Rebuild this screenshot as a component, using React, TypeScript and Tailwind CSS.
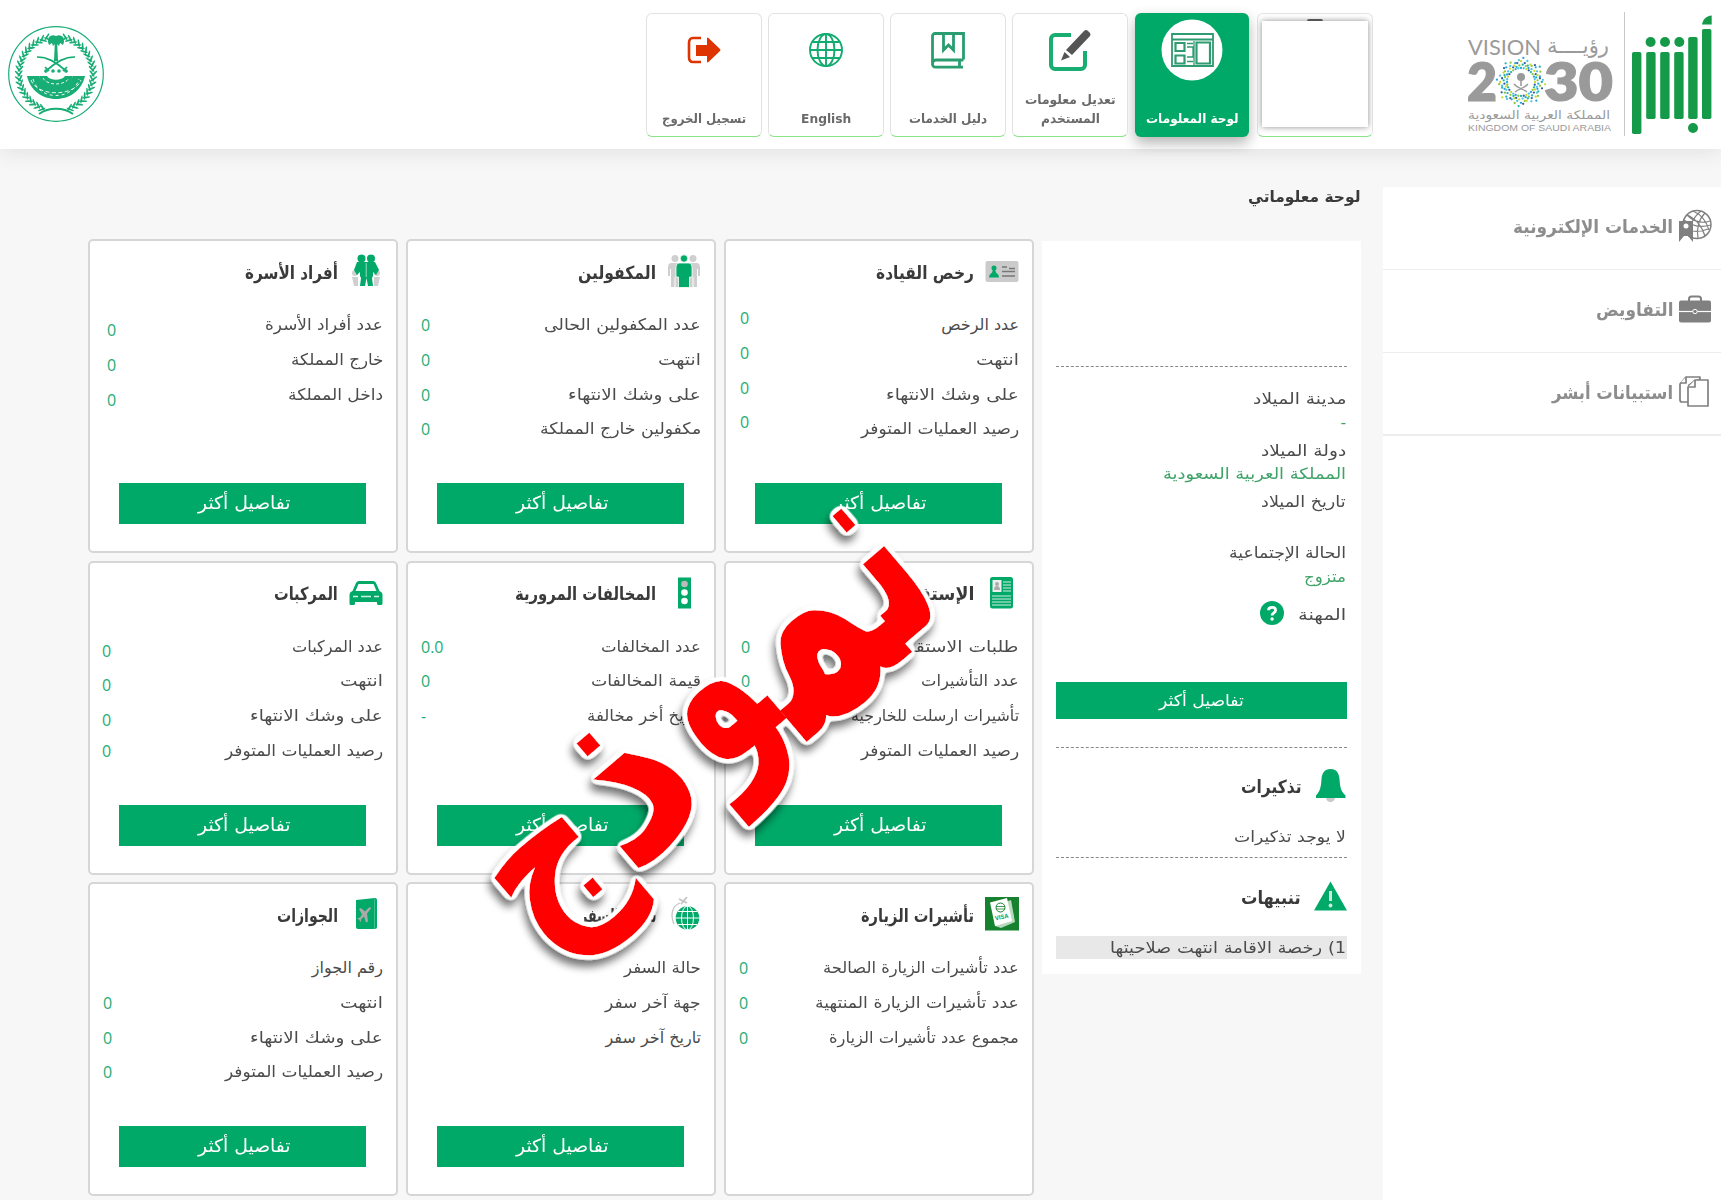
import { useLayoutEffect, useRef, useState } from "react";
import type { ReactNode } from "react";

const G = "#00a968";

/* Text squeezed or stretched horizontally to a fixed measure. */
function Fit({ w, children, className = "" }: { w: number; children: string; className?: string }) {
  const ref = useRef<HTMLSpanElement>(null);
  const [scale, setScale] = useState(1);
  useLayoutEffect(() => {
    if (ref.current && ref.current.offsetWidth) setScale(w / ref.current.offsetWidth);
  }, [w]);
  return (
    <span className={"inline-flex shrink-0 justify-start whitespace-nowrap " + className} style={{ width: w }}>
      <span ref={ref} className="inline-block shrink-0 origin-right" style={{ transform: `scaleX(${scale})` }}>
        {children}
      </span>
    </span>
  );
}

function Emblem() {
  const leaves = [];
  for (let i = 0; i < 20; i++) {
    const a = ((108 + i * 7.6) * Math.PI) / 180;
    const x = 49 + Math.cos(a) * 37;
    const y = 49 - Math.sin(a) * 37;
    const deg = -(a * 180) / Math.PI;
    leaves.push(
      <g key={i} transform={`translate(${x} ${y}) rotate(${deg})`}>
        <ellipse cx="3" cy="1" rx="4" ry="0.9" transform="rotate(50)" />
        <ellipse cx="-3" cy="1" rx="4" ry="0.9" transform="rotate(-50)" />
      </g>
    );
  }
  return (
    <svg width="98" height="98" viewBox="0 0 98 98" fill="#17ad75">
      <circle cx="49" cy="49" r="47.3" fill="none" stroke="#17ad75" strokeWidth="1.2" />
      <g>{leaves}</g>
      <g transform="matrix(-1 0 0 1 98 0)">{leaves}</g>
      <path d="M47.8 18h2.4l.8 18h-4z" />
      <path d="M42 12q3-3 7-1 4-2 7 1 2 4 0 8l-3-2-1 3-3-3-3 3-1-3-3 2q-2-4 0-8z" />
      <g fill="none" stroke="#17ad75" strokeWidth="1.7">
        <path d="M30 32c10 0 18 4 30 15M68 32c-10 0-18 4-30 15" />
        <path d="M56 46l4-4M42 46l-4-4" />
      </g>
      <circle cx="39" cy="46" r="1.8" /><circle cx="59" cy="46" r="1.8" />
      <circle cx="46" cy="46" r="1.8" /><circle cx="52" cy="46" r="1.8" />
      <path d="M20 51h12c4 13 30 13 34 0h12c-3 14-15 23-29 23S23 65 20 51z" />
      <path d="M32 51h8c3 5 15 5 18 0h8c-3 14-31 14-34 0z" />
      <g fill="none" stroke="#fff" strokeWidth="0.9">
        <path d="M24 55c6 17 44 17 50 0" strokeDasharray="4 2.4" />
        <path d="M26 54c6 22 40 22 46 0" strokeDasharray="3 3" />
        <path d="M36 53c4 8 22 8 26 0" strokeDasharray="3 2" />
      </g>
      <path d="M32 89c10-7 24-7 34 0" fill="none" stroke="#17ad75" strokeWidth="2" />
    </svg>
  );
}

function VisionLogo() {
  const cols = ["#2aa5dc", "#8cc63f", "#1fb5ad", "#2f5fa5", "#c9d92b", "#4cc3e8"];
  const dots = [];
  for (let ring = 0; ring < 4; ring++) {
    for (let i = 0; i < 32; i++) {
      const point = Math.abs((i % 4) - 2) / 2;
      const r = 14 + ring * (1.9 + point * 1.5);
      const a = ((i + (ring % 2) * 0.5) / 32) * Math.PI * 2;
      dots.push(
        <circle key={ring + "-" + i} cx={53 + Math.sin(a) * r} cy={60 - Math.cos(a) * r} r={1.15} fill={cols[(i * 5 + ring * 2) % 6]} />
      );
    }
  }
  return (
    <svg direction="ltr" width="146" height="114" viewBox="0 0 146 114" fill="#9a9a9a" fontFamily="Lato, sans-serif">
      <text x="0" y="33" fontSize="21.5" textLength="73" lengthAdjust="spacingAndGlyphs">VISION</text>
      <text x="141" y="31" fontSize="22" direction="rtl" fontFamily="'DejaVu Sans', sans-serif" textLength="62" lengthAdjust="spacingAndGlyphs">رؤيــــة</text>
      <text x="-1" y="79" fontSize="52" fontWeight="800" textLength="30" lengthAdjust="spacingAndGlyphs" stroke="#9a9a9a">2</text>
      <text x="76" y="79" fontSize="52" fontWeight="800" textLength="69" lengthAdjust="spacingAndGlyphs" stroke="#9a9a9a">30</text>
      {dots}
      <circle cx="53" cy="55" r="4" />
      <path d="M52.200 56h1.600v8h-1.600z" />
      <path d="M46 62c3 4 8 4 13 8M60 62c-3 4-8 4-13 8" fill="none" stroke="#9a9a9a" strokeWidth="1.400" />
      <text x="142" y="97" fontSize="12" direction="rtl" fontFamily="'DejaVu Sans', sans-serif" textLength="142" lengthAdjust="spacingAndGlyphs">المملكة العربية السعودية</text>
      <text x="0" y="109" fontSize="9.800" fontFamily="'Liberation Sans', sans-serif" textLength="143" lengthAdjust="spacingAndGlyphs">KINGDOM OF SAUDI ARABIA</text>
    </svg>
  );
}

function AbsherLogo() {
  const bars = [
    [0, 40, 82], [14.2, 40, 67], [28.2, 40, 67], [42.2, 40, 67], [56.2, 25, 82], [70, 17, 90],
  ];
  return (
    <svg width="80" height="124" viewBox="0 0 80 124" fill="#149a48">
      {bars.map(([x, y, h]) => <rect key={x} x={x} y={y} width="9.4" height={h} rx="1.8" />)}
      <path d="M70 12.5c1-5 4-8.500 9.700-9v9z" />
      <circle cx="18.600" cy="30" r="5" /><circle cx="33" cy="30" r="5" /><circle cx="47.300" cy="30" r="5" />
      <circle cx="61" cy="116" r="5" />
    </svg>
  );
}

function GlobeIcon() {
  return (
    <svg width="34" height="34" viewBox="0 0 34 34" fill="none" stroke="#12ab70" strokeWidth="1.9">
      <circle cx="17" cy="17" r="16" /><ellipse cx="17" cy="17" rx="8.500" ry="16" />
      <path d="M17 1v32M1 17h32M3.500 9h27M3.500 25h27" />
    </svg>
  );
}

function BookIcon() {
  return (
    <svg width="34" height="37" viewBox="0 0 34 37" fill="none" stroke="#2a9d70" strokeWidth="2.800">
      <path d="M32.500 27.500V1.500H4A2.500 2.500 0 0 0 1.500 4v28A3 3 0 0 0 4.500 35.200H32M32.500 28H5a3.500 3.500 0 0 0-3.500 3.500M28.500 28v7" />
      <path d="M12.500 2v16l5-5 5 5V2" />
    </svg>
  );
}

function LogoutIcon() {
  return (
    <svg width="34" height="28" viewBox="0 0 34 28">
      <path d="M14 2H6Q2 2 2 7v14q0 5 4 5h8" fill="none" stroke="#de3500" strokeWidth="2.600" />
      <path d="M9 9h11V2.500Q20 1 21.500 2L33 13q1 1 0 2L21.500 26Q20 27 20 25.500V20H9z" fill="#de3500" />
    </svg>
  );
}

function EditIcon() {
  return (
    <svg width="44" height="44" viewBox="0 0 44 44">
      <path d="M23 7H7a4 4 0 0 0-4 4v26a4 4 0 0 0 4 4h26a4 4 0 0 0 4-4V23" fill="none" stroke="#1aad72" strokeWidth="4" />
      <path d="M18 22 36 3q2-2 4 0l2 2q1 1.500 0 3L24 27z M16.500 24l5.500 5-9 3.500z" fill="#555" />
    </svg>
  );
}

function DashboardIcon() {
  return (
    <svg width="62" height="62" viewBox="0 0 62 62">
      <circle cx="31" cy="31" r="30.500" fill="#fff" />
      <g fill="none" stroke="#2f9b70" strokeWidth="1.800">
        <path d="M11 15h41v32H11zM11 20.500h41" />
        <path d="M14.500 24h9v8h-9zM14.500 36.500h9v8h-9zM35.500 23.500H49v21H35.500z" strokeWidth="2.200" />
        <path d="M26 24.500h6M26 28h6v5M26 38h6v-5M26 42.500h6M33 22v24" strokeWidth="1.300" />
      </g>
    </svg>
  );
}

type NavTile = { icon: ReactNode; lines: [string, number][]; active?: boolean };

const tiles: NavTile[] = [
  { icon: <DashboardIcon />, lines: [["لوحة المعلومات", 93]], active: true },
  { icon: <EditIcon />, lines: [["تعديل معلومات", 91], ["المستخدم", 59]] },
  { icon: <BookIcon />, lines: [["دليل الخدمات", 78]] },
  { icon: <GlobeIcon />, lines: [["English", 50]] },
  { icon: <LogoutIcon />, lines: [["تسجيل الخروج", 84]] },
];

function Tile({ t }: { t: NavTile }) {
  return (
    <div
      className={
        "flex h-[124px] flex-col items-center justify-between rounded-md text-[13px] font-bold leading-[19px] " +
        (t.active
          ? "ml-px mr-[2px] w-[114px] bg-[#00a968] pb-[9px] text-white shadow-[0_6px_14px_rgba(0,0,0,0.3)]"
          : "w-[116px] border border-[#e2e2e2] border-b-[#8be587] bg-white pb-[8px] text-[#6a6a6a]")
      }
    >
      <div className={"flex items-center justify-center " + (t.active ? "h-[74px]" : "h-[72px]")}>{t.icon}</div>
      <div className="flex flex-col items-center">
        {t.lines.map(([s, w]) => <Fit key={s} w={w}>{s}</Fit>)}
      </div>
    </div>
  );
}

function Header() {
  return (
    <header className="relative z-10 flex h-[149px] shrink-0 items-start bg-white shadow-[0_2px_22px_rgba(0,0,0,0.1)]">
      <div className="mr-[9px] mt-[12px] flex">
        <AbsherLogo />
        <div className="mr-[7px] h-[124px] w-px bg-[#c9c9c9]" />
        <div className="mr-[10px] mt-[10px]"><VisionLogo /></div>
      </div>
      <nav className="mr-[95px] mt-[13px] flex gap-[6px]">
        <div className="h-[124px] w-[116px] overflow-hidden rounded-md border border-[#e2e2e2] border-b-[#8be587] bg-white px-[4px] pt-[7px]">
          <div className="flex h-[106px] justify-center bg-white shadow-[0_0_6px_rgba(0,0,0,0.45)]">
            <div className="-mt-[2px] h-[2px] w-[16px] rounded-t-full bg-[#555]" />
          </div>
        </div>
        {tiles.map((t) => <Tile key={t.lines[0][0]} t={t} />)}
      </nav>
      <div className="ml-[7px] mr-auto mt-[25px]"><Emblem /></div>
    </header>
  );
}

/* ---------- side menu ---------- */

function CertificateGlobe() {
  return (
    <svg width="34" height="34" viewBox="0 0 34 34" fill="none" stroke="#808080">
      <circle cx="19" cy="15.500" r="14" strokeWidth="1.500" />
      <path d="M6 11c9 7 17 8 27 5M9 6c7 7 14 9 23 6M13 28c-3-8 1-19 10-26M20 29c-2-9 1-19 7-25M15 2c7 3 13 9 16 19M9 6c8 3 15 11 18 21M6 20c8 3 15 4 24 0" strokeWidth="1.200" />
      <path d="M1 12h14v21l-5-6-4 0-5 6z" fill="#808080" stroke="none" />
      <circle cx="8" cy="17" r="2.500" fill="#fff" stroke="none" />
    </svg>
  );
}
function Briefcase() {
  return (
    <svg width="34" height="28" viewBox="0 0 34 28">
      <path d="M11 6V4a2.500 2.500 0 0 1 2.500-2.500h7A2.500 2.500 0 0 1 23 4v2" fill="none" stroke="#808080" strokeWidth="2" />
      <rect x="1" y="5.500" width="32" height="22" rx="2" fill="#808080" />
      <path d="M1 16.500h32" stroke="#fff" strokeWidth="1.200" />
      <circle cx="17" cy="16.500" r="2.200" fill="#808080" stroke="#fff" />
    </svg>
  );
}
function Pages() {
  return (
    <svg width="34" height="32" viewBox="0 0 34 32" fill="#fff" stroke="#808080" strokeWidth="1.700" strokeLinejoin="round">
      <path d="M22 3V1H8L2 8v16q0 2 2 2h7V9z" /><path d="M8 1v6H2" />
      <path d="M17 4h13v26H10V11z" /><path d="M17 4v7h-7" />
    </svg>
  );
}

function SideItem({ icon, label, w }: { icon: ReactNode; label: string; w: number }) {
  return (
    <div className="flex h-[83px] items-center gap-[4px] border-b border-[#ededed] pb-[3px] pr-[9px] text-[18px] font-bold text-[#8d8d8d] last:border-b-2">
      <div className="flex w-[35px] justify-center pb-px">{icon}</div>
      <Fit w={w}>{label}</Fit>
    </div>
  );
}

/* ---------- card icons (34 x 34) ---------- */

const Ico = ({ children }: { children: ReactNode }) => (
  <svg width="34" height="34" viewBox="0 0 34 34" fill={G}>{children}</svg>
);

const person = "M-3.500 0h7q3.500 0 3.500 4v9h-2V6h-1v18h-3.500V14h-1v10H-4V6h-1v7h-2V4q0-4 3.500-4z";

const icons: Record<string, ReactNode> = {
  license: (
    <Ico>
      <rect x="0.500" y="7" width="33" height="21" rx="2" fill="#cbcbcb" />
      <circle cx="9" cy="14" r="2.500" /><path d="M4 23.500q0-3 3-5l1-3h2l1 3q3 2 3 5z" />
      <path d="M17 13h5M17 17.500h13M17 22h13M24 14.500h6" stroke="#777" strokeWidth="1.500" />
    </Ico>
  ),
  sponsored: (
    <Ico>
      <g fill="#cfcfcf">
        <circle cx="8" cy="4.500" r="3.500" /><circle cx="26" cy="4.500" r="3.500" />
        <path d={person} transform="translate(8 9)" /><path d={person} transform="translate(26 9)" />
      </g>
      <g stroke="#fff" strokeWidth="0.800"><circle cx="17" cy="4.500" r="3.700" /><path d="M12 9h10q3 0 3 4v10h-2.500v10.500h-11V23H9V13q0-4 3-4z" /></g>
    </Ico>
  ),
  family: (
    <Ico>
      <g fill="#cfcfcf"><circle cx="6" cy="19" r="3" /><circle cx="28" cy="19" r="3" /><path d="M3 23h6v9H5zM25 23h6l-2 9h-4z" /></g>
      <circle cx="12.500" cy="4.500" r="4" /><circle cx="22" cy="4.500" r="4" />
      <path d="M8 8h18l4 8-3 5-3-3v4l-1 2 1 8h-5l-1.500-8-1.500 8h-5l1-8-1-2v-4l-3 3-3-5z" />
      <path d="M17.200 9v14" stroke="#fff" strokeWidth="0.600" />
    </Ico>
  ),
  recruit: (
    <Ico>
      <rect x="5" y="1" width="23" height="31.500" rx="2.500" />
      <rect x="7.500" y="4" width="9" height="12" fill="#eee" /><circle cx="12" cy="8" r="2" fill="#aaa" /><path d="M9 14q0-4 3-4t3 4z" fill="#aaa" />
      <path d="M18 6h8M18 9h8M18 12h8M18 15h8M7 20h19M7 23h19M7 26h19M7 29h19" stroke="#d5eee3" strokeWidth="1" />
    </Ico>
  ),
  signal: (
    <Ico>
      <rect x="11" y="1.500" width="13" height="31" />
      <circle cx="17.500" cy="8" r="3.300" fill="#bbb" /><circle cx="17.500" cy="16.500" r="3.300" fill="#fff" /><circle cx="17.500" cy="25" r="3.300" fill="#fff" />
    </Ico>
  ),
  car: (
    <Ico>
      <path d="M7 7q1-2 3-2h14q2 0 3 2l3.500 8q3 1 3 4v8.500q0 1.500-1.500 1.500h-2.500q-1.500 0-1.500-1.500V26h-22v1.500Q6 29 4.500 29H2Q.5 29 .5 27.500V19q0-3 3-4z" />
      <path d="M9.500 8h15l3 7h-21z" fill="#fff" /><path d="M4 20.500h5M12 20.500h10M25 20.500h5" stroke="#d5eee3" strokeWidth="1.400" />
    </Ico>
  ),
  visa: (
    <Ico>
      <rect width="34" height="33.500" fill="#16812f" />
      <path d="M9 9l17-6 4 22-14 6-6-2z" fill="#b9d9bf" />
      <path d="M5 5.500 22 1l5 23-17 5z" fill="#fff" />
      <circle cx="15.500" cy="10.500" r="4.500" fill="none" stroke="#16812f" /><path d="M11 9.500h9M11 12h9" stroke="#16812f" strokeWidth="0.800" />
      <text direction="ltr" x="10.500" y="23.500" fontSize="6" fontWeight="bold" fontFamily="Roboto, sans-serif" transform="rotate(-13 10.500 23.500)">VISA</text>
    </Ico>
  ),
  travel: (
    <Ico>
      <circle cx="20.500" cy="21" r="11.800" />
      <g fill="none" stroke="#fff" strokeWidth="1"><path d="M20.500 9v24M8.500 21h24M11 14.500h19M11 27.500h19" /><ellipse cx="20.500" cy="21" rx="6" ry="12" /></g>
      <path d="M13 6C5 9 3 18 7 27" fill="none" stroke="#c4c4c4" strokeWidth="1.300" />
      <path d="M12 2l8 4M20 0l-6 7" stroke="#c4c4c4" strokeWidth="1.800" />
    </Ico>
  ),
  passport: (
    <Ico>
      <path d="M7 3l19-2q2 0 2 2v27q0 2-2 2H9q-2 0-2-2z" />
      <path d="M25.500 2v30" stroke="#40bf8d" />
      <path d="M10 12l2-1 4 3.500 4-4q2-1 2 1l-4 5 1 8-2 1-2-6-3 3v3l-2-3-2-1 3-1 2-3z" fill="#aaa" />
    </Ico>
  ),
};

type CardData = {
  icon: string;
  title: [string, number];
  rows: [string, number][];
  values: string[];
  valuesClass: string;
  more?: boolean;
};

const outOf: [string, number] = ["على وشك الانتهاء", 133];
const balance: [string, number] = ["رصيد العمليات المتوفر", 158];
const ended: [string, number] = ["انتهت", 43];

const cards: CardData[] = [
  { icon: "license", title: ["رخص القيادة", 98], rows: [["عدد الرخص", 78], ended, outOf, balance], values: ["0", "0", "0", "0"], valuesClass: "-mt-[7px] ml-[14px]", more: true },
  { icon: "sponsored", title: ["المكفولين", 78], rows: [["عدد المكفولين الحالى", 157], ended, outOf, ["مكفولين خارج المملكة", 161]], values: ["0", "0", "0", "0"], valuesClass: "ml-[13px]", more: true },
  { icon: "family", title: ["أفراد الأسرة", 93], rows: [["عدد أفراد الأسرة", 118], ["خارج المملكة", 92], ["داخل المملكة", 95]], values: ["0", "0", "0"], valuesClass: "mt-[5px] ml-[17px]", more: true },
  { icon: "recruit", title: ["الإستقدام", 84], rows: [["طلبات الاستقدام", 130], ["عدد التأشيرات", 98], ["تأشيرات ارسلت للخارجية", 168], balance], values: ["0", "0", "0", "0"], valuesClass: "ml-[15px]", more: true },
  { icon: "signal", title: ["المخالفات المرورية", 141], rows: [["عدد المخالفات", 100], ["قيمة المخالفات", 110], ["تاريخ أخر مخالفة", 115]], values: ["0.0", "0", "-"], valuesClass: "ml-[13px]", more: true },
  { icon: "car", title: ["المركبات", 64], rows: [["عدد المركبات", 91], ended, outOf, balance], values: ["0", "0", "0", "0"], valuesClass: "mt-[4px] ml-[12px] last:*:last:-mt-[4px]", more: true },
  { icon: "visa", title: ["تأشيرات الزيارة", 113], rows: [["عدد تأشيرات الزيارة الصالحة", 196], ["عدد تأشيرات الزيارة المنتهية", 204], ["مجموع عدد تأشيرات الزيارة", 190]], values: ["0", "0", "0"], valuesClass: "ml-[13px]" },
  { icon: "travel", title: ["سجل السفر", 76], rows: [["حالة السفر", 77], ["جهة آخر سفر", 96], ["تاريخ آخر سفر", 96]], values: [], valuesClass: "", more: true },
  { icon: "passport", title: ["الجوازات", 61], rows: [["رقم الجواز", 71], ended, outOf, balance], values: ["", "0", "0", "0"], valuesClass: "ml-[13px]", more: true },
];

function Card({ c }: { c: CardData }) {
  return (
    <section className="flex h-[314px] flex-col rounded-[5px] border-2 border-[#d6d6d6] bg-white">
      <div className="flex h-[67px] shrink-0 items-center pb-[5px] pr-[13px] text-[18px] font-bold text-[#3a3a3a]">
        <div className="ml-[11px] shrink-0 pb-[2px]">{icons[c.icon]}</div>
        <Fit w={c.title[1]}>{c.title[0]}</Fit>
      </div>
      <div className="flex h-[175px] shrink-0 justify-between">
        <div className="pr-[13px] text-[16px] text-[#4b4b4b]">
          {c.rows.map(([s, w]) => (
            <div key={s} className="flex h-[34.670px] items-center"><Fit w={w}>{s}</Fit></div>
          ))}
        </div>
        <div dir="ltr" className={"font-['Open_Sans',sans-serif] text-[16px] text-[#1fac74] " + c.valuesClass}>
          {c.values.map((v, i) => (
            <div key={i} className="flex h-[34.670px] items-center">{v}</div>
          ))}
        </div>
      </div>
      {c.more && (
        <div className="ml-[29px] flex h-[41px] w-[247px] items-center justify-center self-end bg-[#00a968] pb-[2px] pl-[3px] text-[18px] text-white">
          <Fit w={93}>تفاصيل أكثر</Fit>
        </div>
      )}
    </section>
  );
}

function Profile() {
  const line = "shrink-0 border-t border-dashed border-[#888]";
  return (
    <aside className="mt-px flex h-[733px] w-[319px] flex-col bg-white pl-[14px] pr-[14px] text-[15.500px] leading-[24px] text-[#4b4b4b]">
      <div className={"mt-[125px] " + line} />
      <div className="flex flex-col pr-px">
        <div className="mt-[20px] flex h-[24px]"><Fit w={94}>مدينة الميلاد</Fit></div>
        <div className="flex h-[28px] text-[#3fa368]">-</div>
        <div className="flex h-[23px]"><Fit w={85}>دولة الميلاد</Fit></div>
        <div className="flex h-[28px] text-[#3fa368]"><Fit w={183}>المملكة العربية السعودية</Fit></div>
        <div className="flex h-[51px]"><Fit w={85}>تاريخ الميلاد</Fit></div>
        <div className="flex h-[24px]"><Fit w={117}>الحالة الإجتماعية</Fit></div>
        <div className="flex h-[37px] text-[#3fa368]"><Fit w={42}>متزوج</Fit></div>
        <div className="flex h-[25px] items-center gap-[14px]">
          <Fit w={48}>المهنة</Fit>
          <svg width="24" height="24" viewBox="0 0 24 24" className="-mt-[3px]">
            <circle cx="12" cy="12" r="12" fill={G} />
            <path d="M8.500 9.300C8.700 5.500 15.600 5.500 15.600 9.300c0 2.600-3.500 2.500-3.500 5.200" fill="none" stroke="#fff" strokeWidth="2.800" />
            <circle cx="12.100" cy="18" r="1.700" fill="#fff" />
          </svg>
        </div>
      </div>
      <div className="mt-[55px] flex h-[37px] shrink-0 items-center justify-center bg-[#00a968] text-[16px] text-white"><Fit w={85}>تفاصيل أكثر</Fit></div>
      <div className={"mt-[28px] " + line} />
      <div className="mt-[18px] flex h-[38px] items-center gap-[13px] text-[18px] font-bold text-[#3a3a3a]">
        <svg width="33" height="35" viewBox="0 0 33 35">
          <circle cx="16.500" cy="29.500" r="4.500" fill="#c9c9c9" />
          <path d="M16.500 1c6 0 8.500 4 9 10 .5 7 1 12 6 16.500V30H2v-2.500C6.500 23 7 18 7.500 11 8 5 10.500 1 16.500 1z" fill={G} />
        </svg>
        <div className="pt-[4px]"><Fit w={60}>تذكيرات</Fit></div>
      </div>
      <div className="mt-[21px] flex h-[32px] pr-px"><Fit w={112}>لا يوجد تذكيرات</Fit></div>
      <div className={line} />
      <div className="mt-[19px] flex h-[38px] items-center gap-[13px] text-[18px] font-bold text-[#3a3a3a]">
        <svg width="33" height="30" viewBox="0 0 33 30">
          <path d="M16.500.500 33 29.500H0z" fill={G} />
          <path d="M16.500 10v10" stroke="#cfe9dd" strokeWidth="3" /><circle cx="16.500" cy="24.500" r="1.900" fill="#cfe9dd" />
        </svg>
        <div className="pt-[3px]"><Fit w={60}>تنبيهات</Fit></div>
      </div>
      <div className="mt-[21px] flex h-[23px] items-center bg-[#e8e8e8] pr-px"><Fit w={236}>1) رخصة الاقامة انتهت صلاحيتها</Fit></div>
    </aside>
  );
}

/* ---------- sample stamp ---------- */

/* Ink bounds of a letter drawn at 200px from the origin: left, top, right, bottom. */
function inkBounds(ch: string): [number, number, number, number] | null {
  const c = document.createElement("canvas");
  c.width = 800;
  c.height = 800;
  const ctx = c.getContext("2d");
  if (!ctx) return null;
  ctx.direction = "ltr";
  ctx.textAlign = "left";
  ctx.font = "bold 200px 'DejaVu Sans'";
  ctx.fillText(ch, 300, 400);
  const px = ctx.getImageData(0, 0, 800, 800).data;
  let l = 800, t = 800, r = 0, b = 0;
  for (let y = 0; y < 800; y++)
    for (let x = 0; x < 800; x++)
      if (px[(y * 800 + x) * 4 + 3] > 100) {
        l = Math.min(l, x);
        r = Math.max(r, x + 1);
        t = Math.min(t, y);
        b = Math.max(b, y + 1);
      }
  return r > l ? [l - 300, t - 400, r - 300, b - 400] : null;
}

/* One letter of the stamp, in its joined form; its ink fills the box [left, top, right, bottom]. */
function StampLetter({ ch, box }: { ch: string; box: [number, number, number, number] }) {
  const [m, setM] = useState("");
  const [l, t, r, b] = box;
  useLayoutEffect(() => {
    const k = inkBounds(ch);
    if (!k) return;
    const sx = (r - l) / (k[2] - k[0]);
    const sy = (b - t) / (k[3] - k[1]);
    setM(`matrix(${sx} 0 0 ${sy} ${l - k[0] * sx} ${t - k[1] * sy})`);
  }, [ch, l, t, r, b]);
  return <text transform={m} textAnchor="start">{ch}</text>;
}

function Stamp() {
  return (
    <svg direction="ltr" className="pointer-events-none absolute inset-0 z-20" width="1721" height="1200" viewBox="0 0 1721 1200">
      <defs>
        <filter id="outline" filterUnits="userSpaceOnUse" x="400" y="400" width="700" height="700">
          <feGaussianBlur in="SourceAlpha" stdDeviation="3" />
          <feComponentTransfer result="fat"><feFuncA type="linear" slope="12" intercept="-0.5" /></feComponentTransfer>
          <feFlood floodColor="#fff" />
          <feComposite in2="fat" operator="in" result="white" />
          <feGaussianBlur in="fat" stdDeviation="4" />
          <feOffset dx="-2" dy="7" />
          <feComponentTransfer result="shade"><feFuncA type="linear" slope="0.55" /></feComponentTransfer>
          <feMerge><feMergeNode in="shade" /><feMergeNode in="white" /><feMergeNode in="SourceGraphic" /></feMerge>
        </filter>
      </defs>
      <g filter="url(#outline)">
        <g transform="translate(941 613) rotate(-40.500)" fontFamily="'DejaVu Sans'" fontWeight="bold" fontSize="200" fill="#fe0000">
          <StampLetter ch={"\uFEE7"} box={[-48, -144, 0, 0]} />
          <StampLetter ch={"\uFEE4"} box={[-186, -91, -47, 19]} />
          <StampLetter ch={"\uFEEE"} box={[-285, -98, -185, 38]} />
          <StampLetter ch={"\uFEAB"} box={[-396, -138, -305, 2]} />
          <StampLetter ch={"\uFE9D"} box={[-512, -95, -404, 45]} />
        </g>
      </g>
    </svg>
  );
}

export default function App() {
  return (
    <div dir="rtl" className="relative flex h-[1200px] w-[1721px] flex-col overflow-hidden bg-[#f7f7f7] font-['DejaVu_Sans',sans-serif]">
      <Header />
      <main className="flex min-h-0 flex-1">
        <div className="mt-[38px] w-[338px] shrink-0 bg-white">
          <SideItem icon={<CertificateGlobe />} label="الخدمات الإلكترونية" w={160} />
          <SideItem icon={<Briefcase />} label="التفاويض" w={78} />
          <SideItem icon={<Pages />} label="استبيانات أبشر" w={121} />
        </div>
        <div className="mr-[22px]">
          <h1 className="flex h-[91px] items-start pr-px pt-[35px] text-[16px] font-bold leading-[26px] text-[#3a3a3a]"><Fit w={112}>لوحة معلوماتي</Fit></h1>
          <div className="flex items-start gap-[8px]">
            <Profile />
            <div className="-mt-px grid w-[946px] grid-cols-3 gap-x-[8px] gap-y-[7.500px]">
              {cards.map((c) => <Card key={c.icon} c={c} />)}
            </div>
          </div>
        </div>
      </main>
      <Stamp />
    </div>
  );
}
